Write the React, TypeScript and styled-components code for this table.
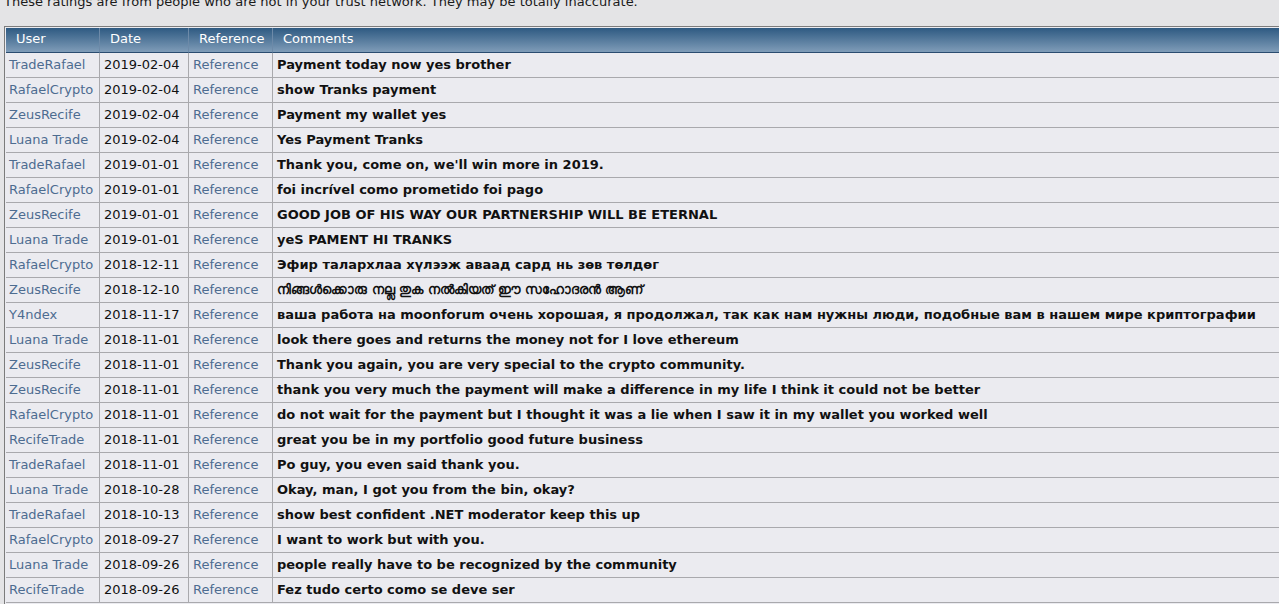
import React from "react";
import styled, { createGlobalStyle } from "styled-components";

const GlobalStyle = createGlobalStyle`
  html, body {
    margin: 0;
    padding: 0;
    background: #e4e4e6;
    overflow: hidden;
  }
  body {
    font-family: "DejaVu Sans", Verdana, sans-serif;
    font-size: 13px;
    color: #111;
  }
`;

const Page = styled.div`
  padding: 0 0 0 4px;
  width: 1400px;
`;

const Notice = styled.p`
  margin: -6px 0 0 0;
  padding: 0;
  line-height: 16px;
  font-size: 13px;
  color: #1a1a1a;
  height: 17px;
`;

const Gap = styled.div`
  height: 15px;
`;

const Table = styled.table`
  border: 1px solid #7c7c7c;
  border-collapse: separate;
  border-spacing: 0;
  padding: 1px;
  background: #ebebf0;
  width: 1310px;
`;

const HeadCell = styled.th<{ $w?: number }>`
  box-sizing: border-box;
  width: ${(p) => (p.$w ? `${p.$w}px` : "auto")};
  text-align: left;
  font-weight: normal;
  color: #ffffff;
  font-size: 13px;
  line-height: 16px;
  padding: 3px 6px 5px 10px;
  background: linear-gradient(#2e5a82, #7f9cb8);
  border-right: 1px solid #6d8aa8;
  border-bottom: 1px solid #2a4c70;
  white-space: nowrap;
`;

const Cell = styled.td<{ $bold?: boolean; $link?: boolean }>`
  box-sizing: border-box;
  padding: 4px 4px 4px 4px;
  line-height: 16px;
  font-size: 13px;
  white-space: nowrap;
  border-right: 1px solid #a9a9ad;
  border-bottom: 1px solid #a9a9ad;
  font-weight: ${(p) => (p.$bold ? "bold" : "normal")};
  color: ${(p) => (p.$link ? "#4d6c90" : "#111")};

  &:first-child {
    padding-left: 3px;
  }
`;

const rows: [string, string, string][] = [
  ["TradeRafael", "2019-02-04", "Payment today now yes brother"],
  ["RafaelCrypto", "2019-02-04", "show Tranks payment"],
  ["ZeusRecife", "2019-02-04", "Payment my wallet yes"],
  ["Luana Trade", "2019-02-04", "Yes Payment Tranks"],
  ["TradeRafael", "2019-01-01", "Thank you, come on, we'll win more in 2019."],
  ["RafaelCrypto", "2019-01-01", "foi incrível como prometido foi pago"],
  ["ZeusRecife", "2019-01-01", "GOOD JOB OF HIS WAY OUR PARTNERSHIP WILL BE ETERNAL"],
  ["Luana Trade", "2019-01-01", "yeS PAMENT HI TRANKS"],
  ["RafaelCrypto", "2018-12-11", "Эфир талархлаа хүлээж аваад сард нь зөв төлдөг"],
  ["ZeusRecife", "2018-12-10", "നിങ്ങൾക്കൊരു നല്ല തുക നൽകിയത് ഈ സഹോദരൻ ആണ്"],
  ["Y4ndex", "2018-11-17", "ваша работа на moonforum очень хорошая, я продолжал, так как нам нужны люди, подобные вам в нашем мире криптографии"],
  ["Luana Trade", "2018-11-01", "look there goes and returns the money not for I love ethereum"],
  ["ZeusRecife", "2018-11-01", "Thank you again, you are very special to the crypto community."],
  ["ZeusRecife", "2018-11-01", "thank you very much the payment will make a difference in my life I think it could not be better"],
  ["RafaelCrypto", "2018-11-01", "do not wait for the payment but I thought it was a lie when I saw it in my wallet you worked well"],
  ["RecifeTrade", "2018-11-01", "great you be in my portfolio good future business"],
  ["TradeRafael", "2018-11-01", "Po guy, you even said thank you."],
  ["Luana Trade", "2018-10-28", "Okay, man, I got you from the bin, okay?"],
  ["TradeRafael", "2018-10-13", "show best confident .NET moderator keep this up"],
  ["RafaelCrypto", "2018-09-27", "I want to work but with you."],
  ["Luana Trade", "2018-09-26", "people really have to be recognized by the community"],
  ["RecifeTrade", "2018-09-26", "Fez tudo certo como se deve ser"],
];

export default function App() {
  return (
    <>
      <GlobalStyle />
      <Page>
        <Notice>These ratings are from people who are not in your trust network. They may be totally inaccurate.</Notice>
        <Gap />
        <Table>
          <thead>
            <tr>
              <HeadCell $w={94}>User</HeadCell>
              <HeadCell $w={89}>Date</HeadCell>
              <HeadCell $w={84}>Reference</HeadCell>
              <HeadCell>Comments</HeadCell>
            </tr>
          </thead>
          <tbody>
            {rows.map(([user, date, comment], i) => (
              <tr key={i}>
                <Cell $link>{user}</Cell>
                <Cell>{date}</Cell>
                <Cell $link>Reference</Cell>
                <Cell $bold>{comment}</Cell>
              </tr>
            ))}
          </tbody>
        </Table>
      </Page>
    </>
  );
}
